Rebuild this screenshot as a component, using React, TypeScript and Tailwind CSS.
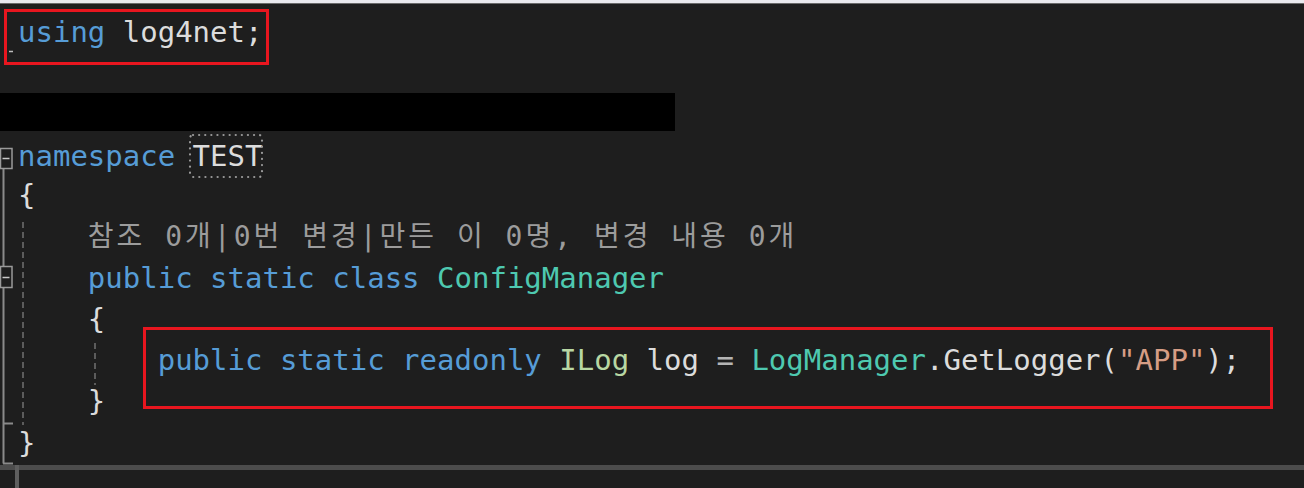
import React from "react";

const K = ({ children }: { children: React.ReactNode }) => <span className="text-[#569cd6]">{children}</span>;
const W = ({ children }: { children: React.ReactNode }) => <span className="text-[#dcdcdc]">{children}</span>;
const T = ({ children }: { children: React.ReactNode }) => <span className="text-[#4ec9b0]">{children}</span>;

function Line({ children }: { children?: React.ReactNode }) {
  return <div className="h-[41.25px] whitespace-pre">{children}</div>;
}

export default function App() {
  return (
    <div className="relative w-[1304px] h-[488px] overflow-hidden bg-[#1e1e1e] font-['DejaVu_Sans_Mono','Noto_Sans_CJK_KR',monospace]">
      <div className="h-[4px] bg-[#e9e9ee] border-b border-[#6a6a6a]" />
      <div className="flex">
        <div className="w-[18px] shrink-0" />
        <div className="pt-[8px] text-[29px] leading-[41.25px] text-[#dcdcdc]">
          <Line>
            <K>using</K> <W>log4net;</W>
          </Line>
          <Line />
          <Line>
            <div className="-ml-[18px] -mt-[2px] w-[675px] h-[38px] bg-black" />
          </Line>
          <Line>
            <div className="pt-[2px]">
              <K>namespace</K>{" "}
              <span className="relative">
                <svg className="absolute -left-[4px] -top-[5px] overflow-visible" width="74" height="44" viewBox="0 0 74 44">
                  <rect x="1" y="1" width="72" height="42" rx="3" fill="none" stroke="#9a9a9a" strokeWidth="2.2" strokeDasharray="0.1 6" strokeLinecap="round" />
                </svg>
                <W>TEST</W>
              </span>
            </div>
          </Line>
          <Line>
            <W>{"{"}</W>
          </Line>
          <Line>
            {"    "}
            <span className="text-[28px] tracking-[3px] text-[#9c9c9c]">참조 0개|0번 변경|만든 이 0명, 변경 내용 0개</span>
          </Line>
          <Line>
            {"    "}
            <K>public static class</K> <T>ConfigManager</T>
          </Line>
          <Line>
            {"    "}
            <W>{"{"}</W>
          </Line>
          <Line>
            {"        "}
            <K>public static readonly</K> <span className="text-[#b8d7a3]">ILog</span> <W>log</W>{" "}
            <span className="text-[#b4b4b4]">=</span> <T>LogManager</T>
            <W>.GetLogger(</W>
            <span className="text-[#d69d85]">"APP"</span>
            <W>);</W>
          </Line>
          <Line>
            {"    "}
            <W>{"}"}</W>
          </Line>
          <Line>
            <W>{"}"}</W>
          </Line>
        </div>
      </div>

      {/* outlining margin */}
      <svg className="absolute left-0 top-0" width="18" height="488" viewBox="0 0 18 488">
        <line x1="9" y1="51.5" x2="13" y2="51.5" stroke="#bdbdbd" strokeWidth="1.5" />
        <line x1="3.5" y1="168" x2="3.5" y2="463.5" stroke="#8a8a8a" strokeWidth="2" />
        <line x1="3" y1="463.5" x2="13" y2="463.5" stroke="#8a8a8a" strokeWidth="2" />
        <line x1="3" y1="423.5" x2="13" y2="423.5" stroke="#8a8a8a" strokeWidth="2" />
        <rect x="0.5" y="148.5" width="11.5" height="20" fill="#1e1e1e" stroke="#9a9a9a" strokeWidth="1.5" />
        <line x1="2.5" y1="158.5" x2="9.5" y2="158.5" stroke="#c8c8c8" strokeWidth="1.5" />
        <rect x="0.5" y="266.5" width="11.5" height="21" fill="#1e1e1e" stroke="#9a9a9a" strokeWidth="1.5" />
        <line x1="2.5" y1="277.5" x2="9.5" y2="277.5" stroke="#c8c8c8" strokeWidth="1.5" />
      </svg>

      {/* indent guides */}
      <div className="absolute left-[22px] top-[222px] w-[2px] h-[203px] bg-[repeating-linear-gradient(to_bottom,#5c5c5c_0px,#5c5c5c_6px,transparent_6px,transparent_10px)]" />
      <div className="absolute left-[94px] top-[343px] w-[2px] h-[42px] bg-[repeating-linear-gradient(to_bottom,#5c5c5c_0px,#5c5c5c_6px,transparent_6px,transparent_10px)]" />

      {/* red highlight boxes */}
      <div className="absolute left-[4px] top-[9px] w-[265px] h-[56px] border-[3px] border-[#e8161f]" />
      <div className="absolute left-[143px] top-[327px] w-[1130px] h-[82px] border-[3px] border-[#e8161f]" />

      {/* bottom edge */}
      <div className="absolute left-0 right-0 top-[465px] h-[5px] bg-[#4c4c4c]" />
      <div className="absolute left-[15px] top-[465px] w-[4px] h-[23px] bg-[#5e5e5e]" />
    </div>
  );
}
